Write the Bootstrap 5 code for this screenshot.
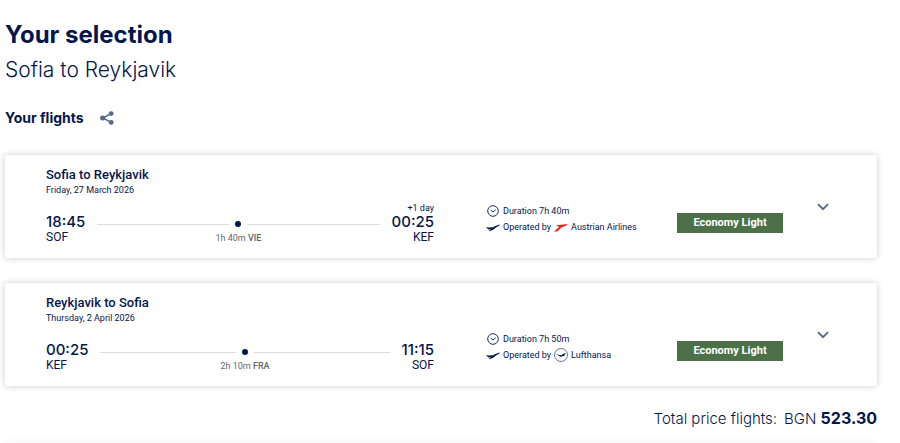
<!DOCTYPE html>
<html lang="en">
<head>
<meta charset="utf-8">
<meta name="viewport" content="width=device-width, initial-scale=1">
<title>Your selection</title>
<link href="https://cdn.jsdelivr.net/npm/bootstrap@5.3.0/dist/css/bootstrap.min.css" rel="stylesheet">
<style>
:root{--navy:#05164d;--slate:#56688c}
body{font-family:Inter,"Open Sans",sans-serif;color:var(--navy);background:#fff}
.page{padding:20px 23px 0 5px}
.page-title{font-size:24px;line-height:30px;font-weight:700}
.page-route{font-size:21px;line-height:28px;font-weight:300;margin-top:6px}
.flights-title{font-size:14px;line-height:20px;font-weight:700}
.flights-head{gap:16px;margin-top:24px;margin-bottom:27px}
.icon-btn{color:var(--slate);line-height:0}
.panel{border-radius:3px;box-shadow:0 0 7px rgba(0,0,0,.2)}
.flight{display:grid;grid-template-columns:388fr 243fr 106fr 46fr;padding:12px 48px 14px 41px;margin-bottom:25px;font-family:Roboto,sans-serif}
.flight-title{font-size:13px;line-height:16px;font-weight:500}
.flight-date{font-size:9px;line-height:15px}
.leg{gap:12px;margin-top:5px}
.stop-time{font-family:Inter,sans-serif;font-size:15px;line-height:16px;font-weight:500}
.stop-code{font-size:12px;line-height:14px}
.stop-note{font-size:9px;line-height:11px}
.leg-line{height:1px;background:#d9dbdd}
.leg-dot{width:6px;height:6px;border-radius:50%;background:var(--navy)}
.leg-row{gap:6px;height:16px}
.leg-via{font-size:9px;line-height:12px;color:#666}
.details{padding-left:52px;padding-top:36px;font-size:9px;line-height:16px;white-space:nowrap}
.detail-row{gap:3px;height:16px}
.detail-icon{width:14px}
.fare{background:#4c7048;color:#fff;font-size:11px;line-height:20px;font-weight:700;margin-top:46px}
.toggle{margin-top:36px}
.total{font-size:15px;line-height:22px;font-weight:300;margin-top:-4px;padding-bottom:13px;gap:7px}
.total strong{font-size:16px}
.next-panel{height:1px}
</style>
<script src="https://cdn.jsdelivr.net/npm/bootstrap@5.3.0/dist/js/bootstrap.bundle.min.js"></script>
</head>
<body>
<svg class="d-none" aria-hidden="true">
  <symbol id="clock" viewBox="0 0 12 12"><circle cx="6" cy="6" r="5.3" fill="none" stroke="#05164d" stroke-width=".9"/><path d="M3.6 5 6 7l2.7-2.2" fill="none" stroke="#05164d" stroke-width=".9"/></symbol>
  <symbol id="plane" viewBox="0 0 14 10"><path d="M0 4.8 2 5.6 6.8 5.2 10 3.8 14 2.4 13.2 3.8 10 5.4 7.6 7.4 4.4 9 2.6 9.2 5 7.2 2.2 7.4Z" fill="#05164d"/></symbol>
  <symbol id="chevron" viewBox="0 0 12 8"><path d="m1 1.2 5 5 5-5" fill="none" stroke="#56688c" stroke-width="1.9"/></symbol>
</svg>
<main class="page">
  <h1 class="page-title mb-0">Your selection</h1>
  <p class="page-route mb-0">Sofia to Reykjavik</p>
  <div class="flights-head d-flex align-items-center">
    <h2 class="flights-title mb-0">Your flights</h2>
    <button type="button" class="icon-btn btn p-0 border-0" aria-label="Share"><svg width="14" height="14" viewBox="0 0 14 14"><path d="M11 2.6 3 7l8 4.4" fill="none" stroke="#56688c" stroke-width="1.5"/><g fill="#56688c"><circle cx="11.2" cy="2.6" r="2.4"/><circle cx="2.6" cy="7" r="2.5"/><circle cx="11.2" cy="11.4" r="2.4"/></g></svg></button>
  </div>

  <article class="flight panel">
    <div>
      <h3 class="flight-title mb-0">Sofia to Reykjavik</h3>
      <div class="flight-date">Friday, 27 March 2026</div>
      <div class="leg d-flex align-items-end">
        <div><div class="stop-time">18:45</div><div class="stop-code">SOF</div></div>
        <div class="flex-grow-1">
          <div class="leg-row d-flex align-items-center"><span class="leg-line flex-fill"></span><span class="leg-dot"></span><span class="leg-line flex-fill"></span></div>
          <div class="leg-via text-center">1h 40m <span class="fw-medium">VIE</span></div>
        </div>
        <div class="text-end"><div class="stop-note">+1 day</div><div class="stop-time">00:25</div><div class="stop-code">KEF</div></div>
      </div>
    </div>
    <div class="details">
      <div class="detail-row d-flex align-items-center"><svg class="detail-icon" height="12"><use href="#clock"/></svg><span>Duration 7h 40m</span></div>
      <div class="detail-row d-flex align-items-center"><svg class="detail-icon" height="10"><use href="#plane"/></svg><span>Operated by</span><svg width="14" height="9" viewBox="0 0 14 9"><path d="M2 2.2 14 1 11 3.2 7.6 4.2 3.4 8.4H0L5.2 4Z" fill="#e2231a"/></svg><span>Austrian Airlines</span></div>
    </div>
    <div><div class="fare text-center">Economy Light</div></div>
    <div class="text-end"><button type="button" class="toggle icon-btn btn p-0 border-0" aria-label="Show flight details"><svg width="12" height="8"><use href="#chevron"/></svg></button></div>
  </article>

  <article class="flight panel">
    <div>
      <h3 class="flight-title mb-0">Reykjavik to Sofia</h3>
      <div class="flight-date">Thursday, 2 April 2026</div>
      <div class="leg d-flex align-items-end">
        <div><div class="stop-time">00:25</div><div class="stop-code">KEF</div></div>
        <div class="flex-grow-1">
          <div class="leg-row d-flex align-items-center"><span class="leg-line flex-fill"></span><span class="leg-dot"></span><span class="leg-line flex-fill"></span></div>
          <div class="leg-via text-center">2h 10m <span class="fw-medium">FRA</span></div>
        </div>
        <div class="text-end"><div class="stop-note">&nbsp;</div><div class="stop-time">11:15</div><div class="stop-code">SOF</div></div>
      </div>
    </div>
    <div class="details">
      <div class="detail-row d-flex align-items-center"><svg class="detail-icon" height="12"><use href="#clock"/></svg><span>Duration 7h 50m</span></div>
      <div class="detail-row d-flex align-items-center"><svg class="detail-icon" height="10"><use href="#plane"/></svg><span>Operated by</span><svg width="14" height="14" viewBox="0 0 14 14"><circle cx="7" cy="7" r="6.5" fill="none" stroke="#05164d" stroke-width=".6"/><path d="M2 5.8 5 7 7.4 7.2 9.4 5.8 12.2 5 10 7.2 11.6 7.6 8.8 8.2 6.6 8.8 4.6 7.7Z" fill="#05164d"/></svg><span>Lufthansa</span></div>
    </div>
    <div><div class="fare text-center">Economy Light</div></div>
    <div class="text-end"><button type="button" class="toggle icon-btn btn p-0 border-0" aria-label="Show flight details"><svg width="12" height="8"><use href="#chevron"/></svg></button></div>
  </article>

  <div class="total d-flex justify-content-end align-items-baseline"><span>Total price flights:</span><span>BGN <strong class="fw-bold">523.30</strong></span></div>
  <div class="panel next-panel"></div>
</main>
</body>
</html>
